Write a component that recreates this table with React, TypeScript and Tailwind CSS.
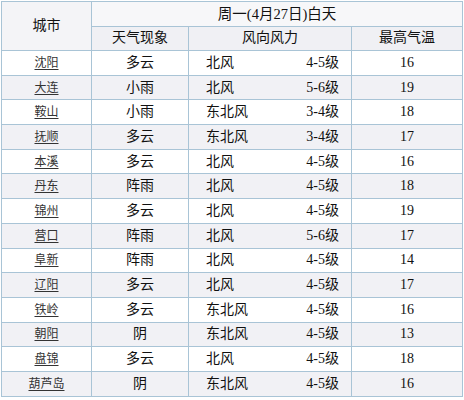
const rows: [string, string, string, string, number][] = [
  ["沈阳", "多云", "北风", "4-5级", 16],
  ["大连", "小雨", "北风", "5-6级", 19],
  ["鞍山", "小雨", "东北风", "3-4级", 18],
  ["抚顺", "多云", "东北风", "3-4级", 17],
  ["本溪", "多云", "北风", "4-5级", 16],
  ["丹东", "阵雨", "北风", "4-5级", 18],
  ["锦州", "多云", "北风", "4-5级", 19],
  ["营口", "阵雨", "北风", "5-6级", 17],
  ["阜新", "阵雨", "北风", "4-5级", 14],
  ["辽阳", "多云", "北风", "4-5级", 17],
  ["铁岭", "多云", "东北风", "4-5级", 16],
  ["朝阳", "阴", "东北风", "4-5级", 13],
  ["盘锦", "多云", "北风", "4-5级", 18],
  ["葫芦岛", "阴", "东北风", "4-5级", 16],
];

const font = { fontFamily: '"Liberation Serif", "Noto Sans CJK SC", serif' };

export default function App() {
  return (
    <div className="w-[464px] h-[400px] bg-white pl-[1px] pt-[1px]" style={font}>
      <table className="table-fixed border-collapse w-[461px] text-[#111] text-[14px] leading-none">
        <colgroup>
          <col className="w-[90px]" />
          <col className="w-[97px]" />
          <col className="w-[163px]" />
          <col className="w-[111px]" />
        </colgroup>
        <thead>
          <tr className="h-[24.5px]">
            <th rowSpan={2} className="border border-[#a9c4d6] bg-[#f4f4f7] font-normal text-[14px]">
              城市
            </th>
            <th colSpan={3} className="border border-[#a9c4d6] bg-[#f7f7f9] font-normal text-[14.5px]">
              周一(4月27日)白天
            </th>
          </tr>
          <tr className="h-[24.5px]">
            <th className="border border-[#a9c4d6] bg-[#f0f0f4] font-normal">天气现象</th>
            <th className="border border-[#a9c4d6] bg-[#f0f0f4] font-normal">风向风力</th>
            <th className="border border-[#a9c4d6] bg-[#f0f0f4] font-normal">最高气温</th>
          </tr>
        </thead>
        <tbody>
          {rows.map(([city, weather, dir, level, temp], i) => (
            <tr key={city} className={i % 2 === 1 ? "h-[24.7px] bg-[#f1f1f5]" : "h-[24.7px] bg-white"}>
              <td className="border border-[#a9c4d6] text-center">
                <span className="text-[12px] underline underline-offset-2 text-[#333]">{city}</span>
              </td>
              <td className="border border-[#a9c4d6] text-center">{weather}</td>
              <td className="border border-[#a9c4d6] pl-[17px] pr-[12px]">
                <div className="flex justify-between">
                  <span>{dir}</span>
                  <span>{level}</span>
                </div>
              </td>
              <td className="border border-[#a9c4d6] text-center">{temp}</td>
            </tr>
          ))}
        </tbody>
      </table>
    </div>
  );
}
